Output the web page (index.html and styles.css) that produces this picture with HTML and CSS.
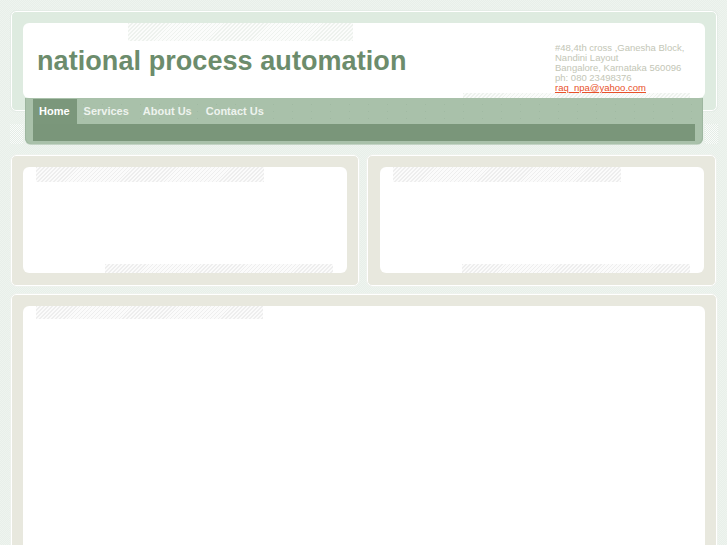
FILE: index.html
```html
<!DOCTYPE html>
<html lang="en">
<head>
<meta charset="utf-8">
<title>national process automation</title>
<link rel="stylesheet" href="styles.css">
</head>
<body>
<div class="page">
  <header class="masthead">
    <div class="masthead-card">
      <h1 class="site-title">national process automation</h1>
      <address class="contact">
        #48,4th cross ,Ganesha Block,<br>
        Nandini Layout<br>
        Bangalore, Karnataka 560096<br>
        ph: 080 23498376<br>
        <a href="#" class="contact-mail">raq_npa@yahoo.com</a>
      </address>
    </div>
  </header>
  <nav class="nav">
    <div class="nav-inner">
      <ul class="nav-list">
        <li class="nav-item nav-item-active">Home</li>
        <li class="nav-item">Services</li>
        <li class="nav-item">About Us</li>
        <li class="nav-item">Contact Us</li>
      </ul>
      <div class="nav-bar"></div>
    </div>
  </nav>
  <div class="panels">
    <section class="panel panel-left"><div class="panel-card panel-card-hatched"></div></section>
    <section class="panel panel-right"><div class="panel-card panel-card-hatched"></div></section>
  </div>
  <section class="panel panel-main"><div class="panel-card panel-card-main"></div></section>
</div>
</body>
</html>
```
FILE: styles.css
```css
* { box-sizing: border-box; }
html, body { margin: 0; height: 545px; overflow: hidden; }
body {
  background: repeating-conic-gradient(#e8efe9 0 25%, #eef4ef 0 50%) 0 0 / 2px 2px;
  font-family: "Liberation Sans", Arial, sans-serif;
}
.page { padding: 11px 10px 0 11px; }

.masthead {
  height: 100px;
  padding: 12px;
  background: #deebe0;
  border: 1px solid #fff;
  border-radius: 5px;
  outline: 1px solid #e4ece6;
}
.masthead-card {
  height: 75px;
  margin: -1px;
  padding: 0 13px;
  display: flex;
  justify-content: space-between;
  border-radius: 6px;
  background:
    repeating-linear-gradient(135deg, #eef2ee 0 1px, #fbfcfb 1px 2.8px) 105px 0 / 225px 18px no-repeat,
    repeating-linear-gradient(135deg, #eef2ee 0 1px, #fbfcfb 1px 2.8px) 440px 70px / 227px 5px no-repeat,
    #fff;
}
.site-title {
  margin: 21px 0 0 1px;
  font-size: 27px;
  line-height: 34px;
  font-weight: bold;
  letter-spacing: 0.07px;
  color: #6c8c6c;
}
.contact {
  width: 137px;
  margin-top: 20px;
  font-style: normal;
  font-size: 9.5px;
  line-height: 10px;
  color: #c3c6b6;
}
.contact-mail { color: #e8512a; }

.nav {
  position: relative;
  height: 46px;
  margin: -13px 14px 0;
  padding: 1px 8px 0;
  background: #a9c1aa;
  border-radius: 0 0 6px 6px;
  box-shadow: 0 1px 0 #c3d4c5, inset 1px 0 0 #9db69f, inset -1px 0 0 #9db69f;
}
.nav::before, .nav::after {
  content: "";
  position: absolute;
  top: 26px;
  width: 13px;
  height: 20px;
  background: repeating-conic-gradient(#e4ece6 0 25%, #fafcfa 0 50%) 0 0 / 2px 2px;
}
.nav::before { left: -15px; }
.nav::after { right: -15px; }
.nav-inner { height: 42px; display: flex; flex-direction: column; }
.nav-list {
  height: 25px;
  margin: 0;
  padding: 0;
  display: flex;
  list-style: none;
  background: radial-gradient(circle, #a0b9a2 0.6px, transparent 0.8px) 3px 2px / 19px 7px;
}
.nav-item {
  padding: 0 7px;
  font-size: 11px;
  line-height: 24px;
  font-weight: bold;
  color: #eef3ee;
}
.nav-item-active { padding-left: 6px; background: #7b977b; color: #fff; }
.nav-bar { height: 17px; background: #7a967a; }

.panels {
  display: grid;
  grid-template-columns: 348px 349px;
  gap: 8px;
  margin-top: 11px;
}
.panel {
  padding: 11px 11px 12px;
  background: #e8e8de;
  border: 1px solid #fff;
  border-radius: 5px;
  outline: 1px solid #eef2ed;
}
.panel-right { padding-left: 12px; }
.panel-main { height: 300px; margin-top: 8px; }
.panel-card {
  height: 106px;
  border-radius: 6px;
  background-color: #fff;
}
.panel-card-hatched {
  background-image:
    repeating-linear-gradient(135deg, #eeeeee 0 1px, #fbfbfb 1px 2.8px),
    repeating-linear-gradient(135deg, #eeeeee 0 1px, #fbfbfb 1px 2.8px);
  background-size: 228px 15px, 228px 9px;
  background-position: 13px 0, 82px 97px;
  background-repeat: no-repeat;
}
.panel-card-main {
  height: 280px;
  background-image: repeating-linear-gradient(135deg, #eeeeee 0 1px, #fbfbfb 1px 2.8px);
  background-size: 227px 13px;
  background-position: 13px 0;
  background-repeat: no-repeat;
}
```
